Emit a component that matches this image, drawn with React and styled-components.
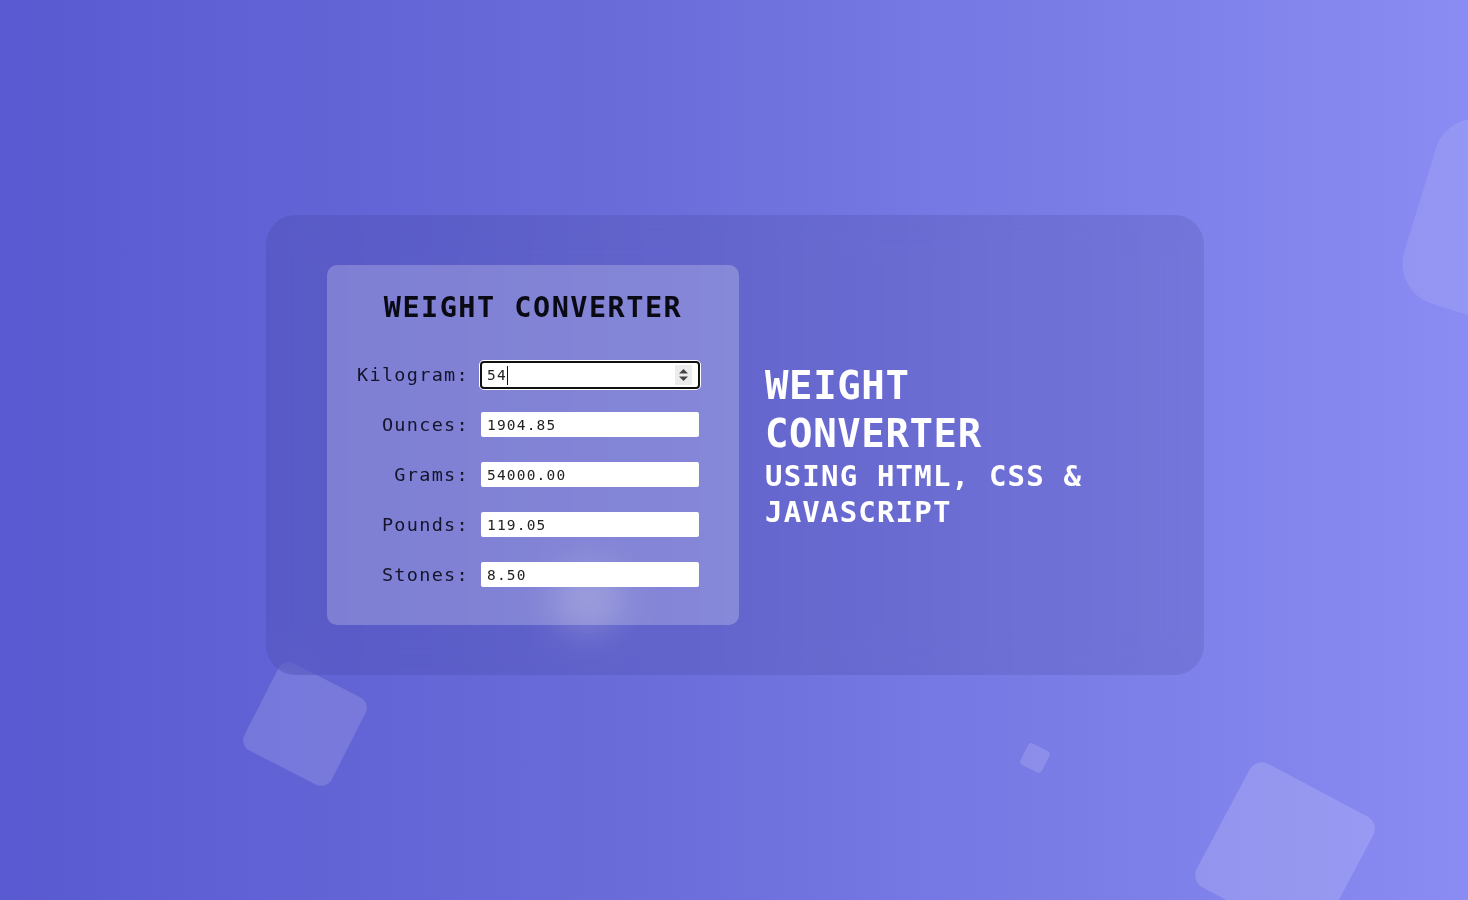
import React from "react";
import styled, { createGlobalStyle } from "styled-components";

const GlobalStyle = createGlobalStyle`
  * { box-sizing: border-box; }
  html, body { margin: 0; padding: 0; }
  body {
    font-family: "DejaVu Sans Mono", "Liberation Mono", monospace;
    overflow: hidden;
  }
`;

const Page = styled.main`
  position: relative;
  width: 100%;
  height: 900px;
  overflow: hidden;
  display: flex;
  align-items: center;
  justify-content: center;
  padding: 0 0 10px 2px;
  background: linear-gradient(90deg, #595ad1 0%, #6b6dda 45%, #8a8cf3 100%);
`;

const Shape = styled.div`
  position: absolute;
  left: ${(p) => p.$x}px;
  top: ${(p) => p.$y}px;
  width: ${(p) => p.$size}px;
  height: ${(p) => p.$size}px;
  border-radius: ${(p) => p.$radius}px;
  transform: translate(-50%, -50%) rotate(${(p) => p.$rotate}deg);
  background: rgba(255, 255, 255, ${(p) => p.$alpha});
`;

const Glow = styled.div`
  position: absolute;
  left: ${(p) => p.$x}px;
  top: ${(p) => p.$y}px;
  width: ${(p) => p.$size}px;
  height: ${(p) => p.$size}px;
  border-radius: 50%;
  transform: translate(-50%, -50%);
  background: rgba(255, 255, 255, 0.25);
`;

const Card = styled.section`
  position: relative;
  z-index: 1;
  width: 938px;
  height: 460px;
  padding: 50px 60px 50px 61px;
  border-radius: 30px;
  display: flex;
  align-items: center;
  gap: 26px;
  background: rgba(30, 30, 95, 0.12);
  backdrop-filter: blur(18px);
  -webkit-backdrop-filter: blur(18px);
`;

const Panel = styled.div`
  width: 412px;
  height: 360px;
  flex: none;
  border-radius: 10px;
  background: rgba(255, 255, 255, 0.22);
  padding: 24px 30px 0 30px;
  display: flex;
  flex-direction: column;
`;

const PanelTitle = styled.h2`
  margin: 0 0 35px 0;
  text-align: center;
  font-size: 28.5px;
  line-height: 38px;
  font-weight: 700;
  letter-spacing: 1.5px;
  color: #0a0a14;
`;

const Form = styled.div`
  display: grid;
  grid-template-columns: auto 218px;
  column-gap: 12px;
  row-gap: 25px;
  align-items: center;
  justify-content: start;
`;

const Label = styled.label`
  text-align: right;
  font-size: 18.5px;
  letter-spacing: 1.3px;
  color: #14142a;
  white-space: nowrap;
`;

const Field = styled.div`
  position: relative;
  width: 218px;
  height: 25px;
`;

const Input = styled.input`
  display: block;
  width: ${(p) => (p.$active ? "220px" : "218px")};
  height: ${(p) => (p.$active ? "28px" : "25px")};
  margin: ${(p) => (p.$active ? "-1.5px 0 0 -1px" : "0")};
  padding: 0 0 0 ${(p) => (p.$active ? "5px" : "6px")};
  border: ${(p) => (p.$active ? "2px solid #111" : "none")};
  box-shadow: ${(p) => (p.$active ? "0 0 0 1px #fff" : "none")};
  border-radius: ${(p) => (p.$active ? "4px" : "2px")};
  background: #fff;
  outline: none;
  font-family: "DejaVu Sans Mono", "Liberation Mono", monospace;
  font-size: 14.5px;
  letter-spacing: 1.2px;
  color: #222;
`;

const Caret = styled.span`
  position: absolute;
  left: 26px;
  top: 4px;
  width: 1px;
  height: 19px;
  background: #111;
`;

const Spinner = styled.span`
  position: absolute;
  right: 7px;
  top: 3px;
  width: 17px;
  height: 20px;
  background: #ececec;
  display: flex;
  align-items: center;
  justify-content: center;
`;

const Side = styled.div`
  flex: 1;
  max-width: 370px;
  color: #fff;
  padding-top: 2px;
`;

const SideTitle = styled.h1`
  margin: 0;
  font-size: 39px;
  line-height: 48px;
  font-weight: 700;
  letter-spacing: 0.6px;
`;

const SideSub = styled.h3`
  margin: 0;
  font-size: 29px;
  line-height: 36px;
  font-weight: 700;
  letter-spacing: 1.2px;
`;

const rows = [
  { label: "Kilogram:", value: "54", active: true },
  { label: "Ounces:", value: "1904.85" },
  { label: "Grams:", value: "54000.00" },
  { label: "Pounds:", value: "119.05" },
  { label: "Stones:", value: "8.50" },
];

export default function App() {
  return (
    <>
      <GlobalStyle />
      <Page>
        <Shape $x={305} $y={724} $size={98} $radius={12} $rotate={27} $alpha={0.14} />
        <Shape $x={1285} $y={852} $size={140} $radius={14} $rotate={28} $alpha={0.15} />
        <Shape $x={1035} $y={758} $size={24} $radius={4} $rotate={27} $alpha={0.14} />
        <Shape $x={1512} $y={228} $size={192} $radius={42} $rotate={17} $alpha={0.1} />
        <Glow $x={588} $y={598} $size={70} />
        <Card>
          <Panel>
            <PanelTitle>WEIGHT CONVERTER</PanelTitle>
            <Form>
              {rows.map((r) => (
                <React.Fragment key={r.label}>
                  <Label>{r.label}</Label>
                  <Field>
                    <Input $active={r.active} type="text" defaultValue={r.value} readOnly />
                    {r.active && (
                      <>
                        <Caret />
                        <Spinner>
                          <svg width="11" height="14" viewBox="0 0 11 14">
                            <path d="M5.5 1 L10 5.5 H1 Z" fill="#444" />
                            <path d="M5.5 13 L10 8.5 H1 Z" fill="#444" />
                          </svg>
                        </Spinner>
                      </>
                    )}
                  </Field>
                </React.Fragment>
              ))}
            </Form>
          </Panel>
          <Side>
            <SideTitle>WEIGHT CONVERTER</SideTitle>
            <SideSub>USING HTML, CSS &amp; JAVASCRIPT</SideSub>
          </Side>
        </Card>
      </Page>
    </>
  );
}
